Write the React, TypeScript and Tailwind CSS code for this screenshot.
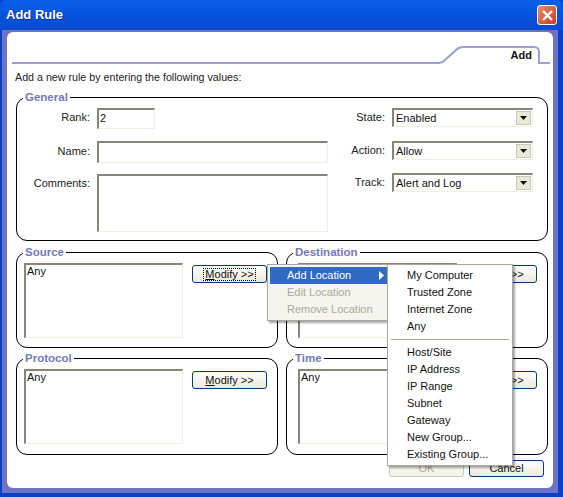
const sans = { fontFamily: '"Liberation Sans", Arial, sans-serif' }

const inset = 'bg-white border-2 border-t-[#85857a] border-l-[#85857a] border-r-[#f1efe2] border-b-[#f1efe2] border-r-[1px] border-b-[1px]'

const Arrow = () => (
  <span className="flex h-[14px] w-[15px] items-center justify-center border border-[#c9c7ba] bg-[#ece9d8]">
    <svg width="7" height="4" viewBox="0 0 7 4"><path d="M0 0h7L3.5 4z" fill="#111" /></svg>
  </span>
)

const Select = ({ value, className }: { value: string; className: string }) => (
  <div className={`flex w-[141px] items-center justify-between pl-[2px] pr-[1px] text-[11px] leading-none text-[#111] ${inset} ${className}`}>
    <span>{value}</span>
    <Arrow />
  </div>
)

const Label = ({ text, className }: { text: string; className: string }) => (
  <div className={`text-right text-[11px] leading-none text-[#222] ${className}`}>{text}</div>
)

const Modify = ({ focused }: { focused?: boolean }) => (
  <button className="flex h-[18px] w-[75px] items-center justify-center rounded-[3px] border border-[#003c74] bg-gradient-to-b from-white to-[#ece9d8] text-[11px] leading-none text-[#111]">
    <span className={focused ? 'border border-dotted border-black px-[1px]' : ''}>
      <span className="underline">M</span>odify &gt;&gt;
    </span>
  </button>
)

const Legend = ({ text }: { text: string }) => (
  <span className="absolute left-[6px] top-[-8px] bg-white px-[2px] text-[11.5px] font-bold leading-[14px] text-[#7379b8]">{text}</span>
)

const ListPanel = ({ title, focused, className }: { title: string; focused?: boolean; className: string }) => (
  <div className={`relative flex items-start rounded-[11px] border border-black pt-[10px] ${className}`}>
    <Legend text={title} />
    <div className={`h-[75px] w-[159px] shrink-0 px-[1px] text-[11px] leading-[13px] text-[#111] ${inset}`}>Any</div>
    <div className="pt-[2px]">
      <Modify focused={focused} />
    </div>
  </div>
)

const Item = ({ text, className = 'text-[#111]' }: { text: string; className?: string }) => (
  <div className={`flex h-[17px] items-center whitespace-nowrap text-[11px] leading-none ${className}`}>{text}</div>
)

export default function App() {
  return (
    <div style={sans} className="relative flex h-[497px] w-[563px] flex-col overflow-hidden bg-[#0a3fc8]">
      <div className="flex h-[30px] shrink-0 items-center justify-between rounded-t-[6px] bg-gradient-to-b from-[#0a5fe8] via-[#0653dc] to-[#0a4bd0] pl-[6px] pr-[6px]">
        <span className="text-[13px] font-bold text-white [text-shadow:1px_1px_0_#0a2a90]">Add Rule</span>
        <span className="flex h-[20px] w-[20px] items-center justify-center rounded-[3px] border border-white bg-gradient-to-br from-[#e88a6a] to-[#c83a18]">
          <svg width="13" height="13" viewBox="0 0 13 13"><path d="M2 2l9 9M11 2l-9 9" stroke="#fff" strokeWidth="2.4" /></svg>
        </span>
      </div>

      <div className="mb-[4px] ml-[2px] mr-[5px] flex-1 bg-[#6d73c2] pb-[5px] pl-[5px] pr-[5px] pt-[2px]">
        <div className="h-[456px] rounded-[6px] bg-white pl-[9px] pr-[5px]">
          <div className="relative h-[32px]">
            <svg className="absolute left-[-4px] top-0" width="545" height="34" viewBox="0 0 545 34">
              <path d="M0 31H427q3 0 6-3l11-10q3-3 7-3H522q5 0 5 5V31H538" fill="none" stroke="#9aa0d6" strokeWidth="2" />
            </svg>
            <span className="absolute right-[16px] top-[16px] text-[11px] font-bold leading-[14px] text-[#111]">Add</span>
          </div>

          <p className="ml-[-1px] pt-[6px] text-[10.7px] leading-[14px] text-[#222]">Add a new rule by entering the following values:</p>

          <div className="relative mt-[13px] h-[144px] rounded-[11px] border border-black">
            <Legend text="General" />
            <div className="grid grid-cols-[73px_231px_1fr_141px] gap-x-[7px] pr-[14px] pt-[10px]">
              <div className="flex flex-col">
                <Label text="Rank:" className="pt-[4px]" />
                <Label text="Name:" className="pt-[23px]" />
                <Label text="Comments:" className="pt-[21px]" />
              </div>
              <div className="flex flex-col items-start">
                <div className={`h-[21px] w-[58px] pl-[1px] text-[11px] leading-[16px] text-[#111] ${inset}`}>2</div>
                <div className={`mt-[12px] h-[22px] w-[231px] ${inset}`} />
                <div className={`mt-[11px] h-[58px] w-[231px] ${inset}`} />
              </div>
              <div className="flex flex-col">
                <Label text="State:" className="pt-[4px]" />
                <Label text="Action:" className="pt-[22px]" />
                <Label text="Track:" className="pt-[21px]" />
              </div>
              <div className="flex w-[141px] flex-col">
                <Select value="Enabled" className="h-[19px]" />
                <Select value="Allow" className="mt-[14px] h-[19px]" />
                <Select value="Alert and Log" className="mt-[13px] h-[19px]" />
              </div>
            </div>
          </div>

          <div className="mt-[11px] grid grid-cols-2 gap-[8px]">
            <ListPanel title="Source" focused className="h-[96px] gap-[9px] pl-[7px]" />
            <ListPanel title="Destination" className="h-[96px] gap-[5px] pl-[11px]" />
          </div>
          <div className="mt-[10px] grid grid-cols-2 gap-[8px]">
            <ListPanel title="Protocol" className="h-[97px] gap-[9px] pl-[7px]" />
            <ListPanel title="Time" className="h-[97px] gap-[5px] pl-[11px]" />
          </div>

          <div className="mt-[5px] flex justify-end gap-[5px] pr-[4px]">
            <button className="h-[17px] w-[75px] rounded-[3px] border border-[#c9c7ba] bg-[#f5f4ea] text-[11px] leading-none text-[#a9a79a]">OK</button>
            <button className="h-[17px] w-[75px] rounded-[3px] border border-[#003c74] bg-gradient-to-b from-white to-[#ece9d8] text-[11px] leading-none text-[#111]">Cancel</button>
          </div>
        </div>
      </div>

      <div className="absolute left-[267px] top-[264px] h-[57px] w-[121px] border border-[#a9a79a] bg-[#f5f4ef] pl-[2px] pt-[2px] shadow-[2px_2px_2px_rgba(0,0,0,0.35)]">
        <div className="relative bg-[#316ac5] pl-[17px]">
          <Item text="Add Location" className="text-white" />
          <svg className="absolute right-[3px] top-[4px]" width="5" height="9" viewBox="0 0 5 9"><path d="M0 0l5 4.5L0 9z" fill="#fff" /></svg>
        </div>
        <div className="pl-[17px]">
          <Item text="Edit Location" className="text-[#aca899]" />
          <Item text="Remove Location" className="text-[#aca899]" />
        </div>
      </div>

      <div className="absolute left-[387px] top-[264px] h-[202px] w-[126px] border border-[#a9a79a] bg-white pl-[19px] pt-[2px] shadow-[2px_2px_2px_rgba(0,0,0,0.35)]">
        <Item text="My Computer" />
        <Item text="Trusted Zone" />
        <Item text="Internet Zone" />
        <Item text="Any" />
        <div className="my-[4px] ml-[-16px] mr-[3px] h-[1px] bg-[#aca899]" />
        <Item text="Host/Site" />
        <Item text="IP Address" />
        <Item text="IP Range" />
        <Item text="Subnet" />
        <Item text="Gateway" />
        <Item text="New Group..." />
        <Item text="Existing Group..." />
      </div>
    </div>
  )
}
